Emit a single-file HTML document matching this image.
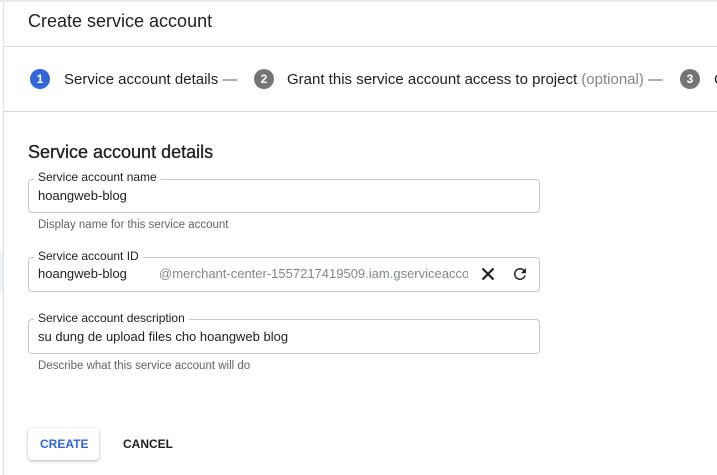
<!DOCTYPE html>
<html><head><meta charset="utf-8"><style>
*{margin:0;padding:0;box-sizing:border-box}
body{width:717px;height:475px;background:#fff;font-family:"Liberation Sans",Arial,sans-serif;position:relative;overflow:hidden;color:#202124}
.a{position:absolute;white-space:nowrap}
.lbar{position:absolute;left:3px;top:0;width:1px;height:475px;background:#e0e0e0}
.hr{position:absolute;left:4px;right:0;height:1px;background:#dadce0}
.circ{position:absolute;width:20px;height:20px;border-radius:50%;color:#fff;font-size:12px;font-weight:bold;text-align:center;line-height:20px}
.box{position:absolute;left:28px;width:512px;border:1px solid #c8c8c8;border-radius:4px}
.lab{position:absolute;left:34px;font-size:12px;background:#fff;padding:0 4px;color:#202124}
.val{font-size:13px}
.help{font-size:11.5px;color:#5f6368}
</style></head><body>
<div class="lbar"></div>
<div style="position:absolute;left:0;top:0;width:717px;height:2px;background:#e8e8e8"></div>
<div class="a" style="left:28px;top:11px;font-size:18px;color:#202124">Create service account</div>
<div class="hr" style="top:46px"></div>
<div class="circ" style="left:30px;top:69px;background:#3367d6">1</div>
<div class="a" style="left:64px;top:71px;font-size:15px">Service account details <span style="color:#5f6368">—</span></div>
<div class="circ" style="left:254px;top:69px;background:#757575">2</div>
<div class="a" style="left:287px;top:71px;font-size:15px">Grant this service account access to project <span style="color:#80868b">(optional)</span> <span style="color:#5f6368">—</span></div>
<div class="circ" style="left:680px;top:69px;background:#757575">3</div>
<div class="a" style="left:714px;top:71px;font-size:15px">C</div>
<div class="hr" style="top:111px"></div>
<div class="a" style="left:28px;top:142px;font-size:18px;font-weight:500;-webkit-text-stroke:0.3px #202124">Service account details</div>

<div class="box" style="top:179px;height:34px"></div>
<div class="lab a" style="top:170px">Service account name</div>
<div class="a val" style="left:38px;top:188px">hoangweb-blog</div>
<div class="a help" style="left:38px;top:219px">Display name for this service account</div>

<div style="position:absolute;left:0;top:252px;width:3px;height:40px;background:#eef1f7"></div>
<div class="box" style="top:257px;height:35px"></div>
<div class="lab a" style="top:249px">Service account ID</div>
<div class="a val" style="left:38px;top:266px">hoangweb-blog</div>
<div class="a val" style="left:159px;top:266px;color:#80868b;width:309px;overflow:hidden">@merchant-center-1557217419509.iam.gserviceaccount.com</div>
<svg class="a" style="left:480px;top:266px" width="16" height="16" viewBox="0 0 16 16"><path d="M2.5 2.5L13.5 13.5M13.5 2.5L2.5 13.5" stroke="#202124" stroke-width="2.2"/></svg>
<svg class="a" style="left:511px;top:265px" width="18" height="18" viewBox="0 0 24 24"><path d="M17.65 6.35A7.96 7.96 0 0 0 12 4a8 8 0 1 0 7.73 10h-2.08A6 6 0 1 1 12 6c1.66 0 3.14.69 4.22 1.78L13 11h7V4l-2.35 2.35z" fill="#202124"/></svg>

<div class="box" style="top:319px;height:35px"></div>
<div class="lab a" style="top:311px">Service account description</div>
<div class="a val" style="left:38px;top:329px">su dung de upload files cho hoangweb blog</div>
<div class="a help" style="left:38px;top:360px">Describe what this service account will do</div>

<div style="position:absolute;left:28px;top:428px;width:71px;height:32px;border-radius:4px;background:#fff;box-shadow:0 1px 3px rgba(0,0,0,.3)"></div>
<div class="a" style="left:40px;top:437px;font-size:12px;font-weight:bold;color:#3367d6">CREATE</div>
<div class="a" style="left:123px;top:437px;font-size:12px;font-weight:bold;color:#202124">CANCEL</div>
</body></html>
